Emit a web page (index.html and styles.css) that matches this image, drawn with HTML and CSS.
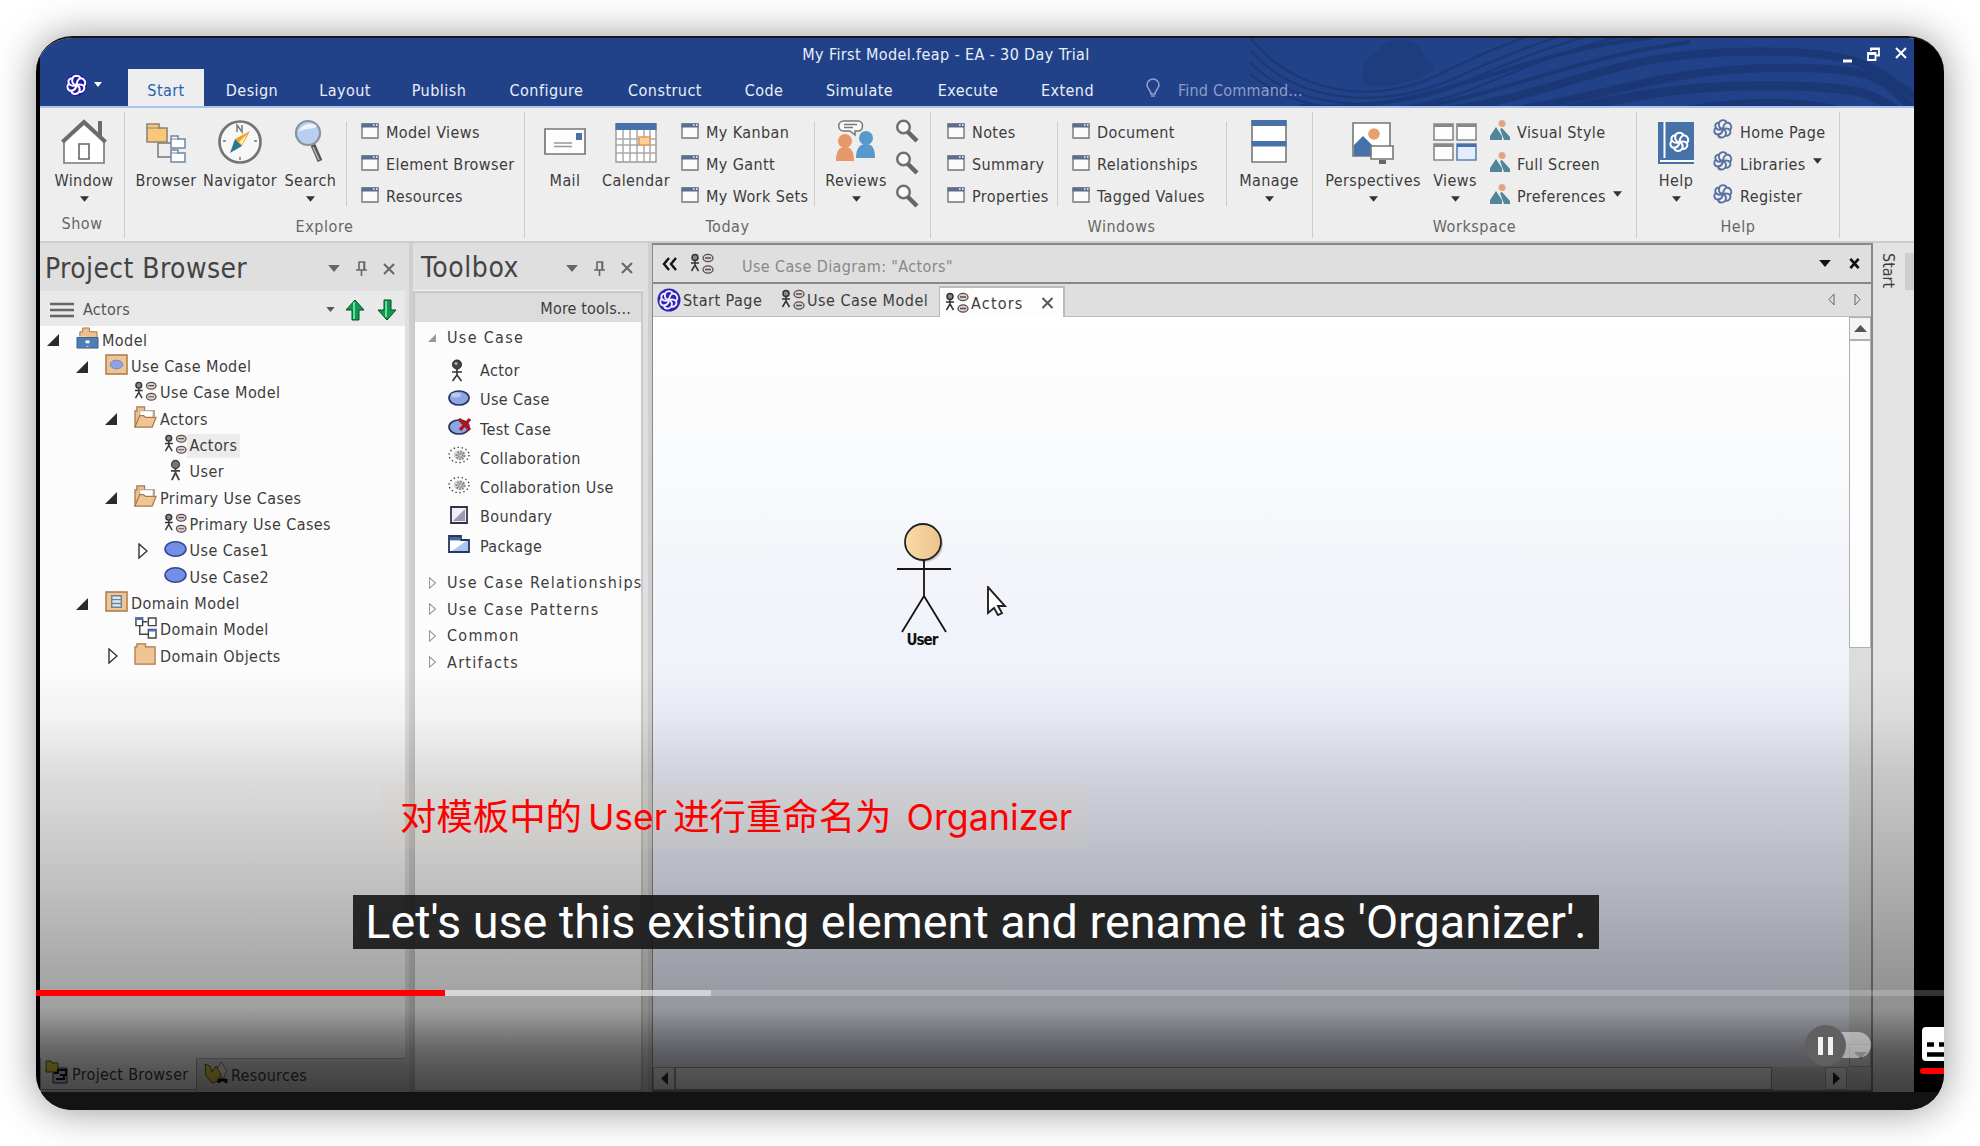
FILE: index.html
```html
<!DOCTYPE html>
<html lang="en">
<head>
<meta charset="utf-8">
<title>My First Model.feap - EA - 30 Day Trial</title>
<link rel="stylesheet" href="styles.css">
</head>
<body>
<svg class="defs" width="0" height="0" aria-hidden="true">
  <symbol id="knot" viewBox="0 0 20 20"><g fill="none" stroke="currentColor" stroke-width="1.9"><path d="M6.200 3.500C7.500 .3 12.500 .3 13.800 3.500C17.500 3.500 19.800 8 17 11C18.500 14.500 15.500 17.500 12.500 16.500C10 19.800 5.500 19 5 15.500C1.200 15.500 .2 11 2.800 8.800C1.500 6 3 3.500 6.200 3.500Z"/><path d="M10 10C6.500 9.800 5.200 7 6.200 3.500M10 10C10.300 6.500 11.500 4.500 13.800 3.500M10 10C13.500 9 15.500 9.500 17 11M10 10C13.200 11.500 13.500 14 12.500 16.500M10 10C9.500 13.500 7.500 15.300 5 15.500M10 10C6.500 11.500 4.500 11 2.800 8.800"/></g></symbol>
  <symbol id="win" viewBox="0 0 18 16"><path d="M1 1h16v14H1z" fill="#fbfbfd" stroke="#777" stroke-width="1.400"/><path d="M.5.500h17v4H.500z" fill="#5c6e8d"/><path d="M12 2h1.500M15 2h1.500" stroke="#fff" stroke-width="1.300"/></symbol>
  <symbol id="mag" viewBox="0 0 24 24"><circle cx="8.500" cy="8" r="6.300" fill="#f8f8f8" stroke="#707070" stroke-width="2.500"/><path d="M13 13L22 22" stroke="#666" stroke-width="4.500"/></symbol>
  <symbol id="pic" viewBox="0 0 20 20"><circle cx="12" cy="3.500" r="3.500" fill="#e3a581"/><path d="M0 20v-4L6 7l6 9v4zM10 9l2-1 8 9v3h-6z" fill="#538497"/></symbol>
  <symbol id="diag" viewBox="0 0 24 21"><g fill="#ddd3d3" stroke="#5a4c4c" stroke-width="1.300"><ellipse cx="18" cy="5" rx="5" ry="3.600"/><ellipse cx="18" cy="16.500" rx="5" ry="3.600"/><path d="M15 5h6M15 16.500h6"/></g><circle cx="5" cy="4.500" r="3" fill="#888" stroke="#333" stroke-width="1.500"/><path d="M5 7.500v5M1 10h8M5 12l-3.500 6M5 12l3.500 6" fill="none" stroke="#333" stroke-width="1.500"/></symbol>
  <symbol id="man" viewBox="0 0 16 24"><circle cx="8" cy="6" r="4.300" fill="#777" stroke="#444" stroke-width="1.500"/><path d="M8 10v6M3 13h10M8 15l-4 8M8 15l4 8" fill="none" stroke="#444" stroke-width="2"/></symbol>
  <symbol id="openf" viewBox="0 0 24 23"><path d="M1 22V5h2V1h8v4h10v6" fill="#edbf8b" stroke="#a87848" stroke-width="1.300"/><path d="M6 5h14v8H6z" fill="#fff" stroke="#aaa"/><path d="M1 22l5-12h4l2 2h11l-4 10z" fill="#f0c596" stroke="#a87848" stroke-width="1.300"/></symbol>
  <symbol id="oval" viewBox="0 0 22 16"><ellipse cx="11" cy="8" rx="10" ry="7" fill="#748fe8" stroke="#35468f" stroke-width="1.500"/></symbol>
  <symbol id="dots" viewBox="0 0 24 18"><ellipse cx="11" cy="9" rx="10" ry="7.600" fill="none" stroke="#444" stroke-width="1.400" stroke-dasharray="1.400 2.600"/><ellipse cx="11.500" cy="9" rx="6" ry="4.800" fill="#d4d4d4"/><ellipse cx="12.500" cy="9.500" rx="3" ry="2.800" fill="none" stroke="#777" stroke-width="4" stroke-dasharray="1 1.200"/></symbol>
  <symbol id="down" viewBox="0 0 10 6"><path d="M0 0h10L5 6z" fill="currentColor"/></symbol>
  <symbol id="pin" viewBox="0 0 12 15"><path d="M2.500 1h6v7M3 1v8M8 1v8M0 9h11M5.500 9v6" fill="none" stroke="#666" stroke-width="1.600"/></symbol>
  <symbol id="cross" viewBox="0 0 12 12"><path d="M1 1l10 10M11 1L1 11" stroke="currentColor" stroke-width="2" fill="none"/></symbol>
  <symbol id="open" viewBox="0 0 12 12"><path d="M12 0v12H0z" fill="#2b2b2b"/></symbol>
  <symbol id="closed" viewBox="0 0 10 16"><path d="M1 1l8 7-8 7z" fill="#fff" stroke="currentColor" stroke-width="1.400"/></symbol>
</svg>

<main class="player">
  <div class="app">
    <header class="titlebar">
      <svg class="waves" viewBox="0 0 664 68" aria-hidden="true"><g fill="none" stroke="#1b3775"><path stroke-width="2" d="M0 0C50 60 130 66 190 36S290-6 330-20M0 12C50 70 140 70 205 40S320-6 350-14M0 24C50 78 150 74 215 44S340-4 380-12M0 36C60 86 160 78 235 46S350 2 400-8"/><path stroke-width="4" d="M50 68C180 78 260 14 400 0M90 74C220 78 290 24 440 4"/><path stroke-width="8" d="M150 76C290 70 340 18 480 14S620 30 670 62M220 78C340 66 400 32 520 30S630 44 670 76"/><path stroke-width="9" d="M300 76C400 52 460 46 540 48S620 56 660 80M420 76C480 62 560 62 600 76"/></g><path d="M114 46c-4-14 0-28 14-32 6-16 38-16 44 0 4 8 10 10 14 16-20 14-46 22-72 16z" fill="#1b3775" opacity=".5"/></svg>
      <div class="caption"><span class="caption-text">My First Model.feap - EA - 30 Day Trial</span>
        <span class="winbtns"><svg width="9" height="16"><path d="M0 14h9" stroke="#fff" stroke-width="3"/></svg><svg width="13" height="14" viewBox="0 0 13 14"><path d="M4 4V1.500h8v7H9M1 6h7.500v7H1zM4 2h8M1 7h8" fill="none" stroke="#fff" stroke-width="1.800"/></svg><svg width="12" height="12" class="white"><use href="#cross"/></svg></span></div>
      <nav class="tabs">
        <span class="appbtn"><svg width="21" height="22"><use href="#knot"/></svg><svg width="8" height="5"><use href="#down"/></svg></span>
        <span class="tab on w76">Start</span><span class="tab w96">Design</span><span class="tab w90">Layout</span><span class="tab w98">Publish</span><span class="tab w117">Configure</span><span class="tab w120">Construct</span><span class="tab w78">Code</span><span class="tab w113">Simulate</span><span class="tab w104">Execute</span><span class="tab w95">Extend</span>
        <span class="find"><svg width="14" height="20" viewBox="0 0 14 20"><path d="M5 16c0-4-4-5-4-9a6 6 0 0 1 12 0c0 4-4 5-4 9zM5 18h4" fill="none" stroke="#8f9fc6" stroke-width="1.600"/></svg>Find Command...</span>
      </nav>
    </header>

    <section class="ribbon">
      <div class="group g-show"><div class="tools">
        <div class="big w88"><svg width="46" height="46" viewBox="0 0 46 46"><path d="M37 2h4v20l-4-4z" fill="#6b6b6b"/><path d="M3 22v22h40V22L23 5z" fill="#fff" stroke="#777" stroke-width="1.600"/><path d="M1.500 23L23 3l21.500 20" fill="none" stroke="#6b6b6b" stroke-width="4"/><path d="M18 25h10v15H18z" fill="#fff" stroke="#666" stroke-width="1.600"/></svg><span>Window</span><svg class="arr"><use href="#down"/></svg></div>
      </div><div class="name">Show</div></div>

      <div class="group g-explore"><div class="tools">
        <div class="big w78"><svg width="40" height="46" viewBox="0 0 40 46"><path d="M12 24v14h14M12 24h14" fill="none" stroke="#777" stroke-width="1.500"/><path d="M1 5h12v4h8v14H1z" fill="#f9c778" stroke="#8f8577" stroke-width="1.600"/><path d="M1 9h14" stroke="#8f8577"/><path d="M25 17h7v3h7v9H25zM25 31h7v3h7v9H25z" fill="#fff" stroke="#6c87a3" stroke-width="1.500"/><path d="M25 20h8M25 34h8" stroke="#6c87a3"/></svg><span>Browser</span></div>
        <div class="big w70"><svg width="44" height="46" viewBox="0 0 44 46"><circle cx="22" cy="23" r="20.500" fill="#f7f7f7" stroke="#747474" stroke-width="2.700"/><path d="M19 13V6l5 7V6M5 22h3M36 22h3M22 38v3" fill="none" stroke="#777" stroke-width="1.500"/><path d="M32 12L17 20l7 7z" fill="#f0a12e"/><path d="M29 15l-8 8 3 3z" fill="#fff3a0"/><path d="M12 34l5-14 7 7z" fill="#2e7590"/></svg><span>Navigator</span></div>
        <div class="big w71"><svg width="34" height="46" viewBox="0 0 34 46"><circle cx="14" cy="14" r="12" fill="#b9cfee" stroke="#8b929c" stroke-width="2.200"/><path d="M4 13c5-9 14-10 19-6-3 4-10 1-19 6z" fill="#eaf3ff"/><path d="M19 26l7 16" stroke="#555" stroke-width="5"/><path d="M19 28l6 13" stroke="#bbb" stroke-width="1.500"/></svg><span>Search</span><svg class="arr"><use href="#down"/></svg></div>
        <div class="list sep pl15"><span><svg><use href="#win"/></svg>Model Views</span><span><svg><use href="#win"/></svg>Element Browser</span><span><svg><use href="#win"/></svg>Resources</span></div>
      </div><div class="name">Explore</div></div>

      <div class="group g-today"><div class="tools">
        <div class="big w80"><svg width="42" height="46" viewBox="0 0 42 46"><path d="M1 10h40v25H1z" fill="#fdfdfd" stroke="#777" stroke-width="1.700"/><path d="M32 14h6v7h-6z" fill="#4b72a8"/><path d="M10 24h18M10 27.500h18" stroke="#999" stroke-width="1.300"/></svg><span>Mail</span></div>
        <div class="big w62"><svg width="42" height="46" viewBox="0 0 42 46"><path d="M1 5h40v38H1z" fill="#fff" stroke="#999" stroke-width="1.400"/><path d="M8 11v32M15 11v32M22 11v32M29 11v32M35 11v32M1 20h40M1 26h40M1 34h40" stroke="#a9a9a9" stroke-width="1.500"/><path d="M.5 4h41v7H.500z" fill="#4672a9"/><path d="M24 18h11v8H24z" fill="#fad196" stroke="#e59b5f" stroke-width="1.600"/></svg><span>Calendar</span></div>
        <div class="list w147 pl14"><span><svg><use href="#win"/></svg>My Kanban</span><span><svg><use href="#win"/></svg>My Gantt</span><span><svg><use href="#win"/></svg>My Work Sets</span></div>
        <div class="big w84 sep"><svg width="44" height="46" viewBox="0 0 44 46"><path d="M10 2h14c6 0 6 10 0 10h-3v4l-5-4h-6c-7 0-7-10 0-10zM10 5.500h13M10 8.500h9" fill="#fafafa" stroke="#777" stroke-width="1.500"/><circle cx="11" cy="22" r="7" fill="#e59868"/><path d="M2 42c0-10 3-14 9-14s9 4 9 14z" fill="#e59868"/><circle cx="32" cy="19" r="7" fill="#5799cb"/><path d="M22 39c0-10 4-14 10-14s9 4 9 14z" fill="#5799cb"/></svg><span>Reviews</span><svg class="arr"><use href="#down"/></svg></div>
        <div class="mags"><svg><use href="#mag"/></svg><svg><use href="#mag"/></svg><svg><use href="#mag"/></svg></div>
      </div><div class="name">Today</div></div>

      <div class="group g-windows"><div class="tools">
        <div class="list w126 pl16"><span><svg><use href="#win"/></svg>Notes</span><span><svg><use href="#win"/></svg>Summary</span><span><svg><use href="#win"/></svg>Properties</span></div>
        <div class="list sep w169 pl15"><span><svg><use href="#win"/></svg>Document</span><span><svg><use href="#win"/></svg>Relationships</span><span><svg><use href="#win"/></svg>Tagged Values</span></div>
        <div class="big w86 sep"><svg width="38" height="46" viewBox="0 0 38 46"><path d="M2 2h34v41H2z" fill="#fff" stroke="#777" stroke-width="1.600"/><path d="M1.500 1h35v6h-35zM1.500 22h35v5.500h-35z" fill="#4672a9"/></svg><span>Manage</span><svg class="arr"><use href="#down"/></svg></div>
      </div><div class="name">Windows</div></div>

      <div class="group g-work"><div class="tools">
        <div class="big w120"><svg width="42" height="46" viewBox="0 0 42 46"><path d="M1 4h37v33H1z" fill="#fff" stroke="#777" stroke-width="1.600"/><circle cx="22" cy="15" r="5.800" fill="#e8a06c"/><path d="M2 37V26l9-9 12 12v8z" fill="#4672a9"/><path d="M19 27h22v13H19z" fill="#fff" stroke="#777" stroke-width="1.600"/><path d="M27 41h7v4h-7z" fill="#666"/></svg><span>Perspectives</span><svg class="arr"><use href="#down"/></svg></div>
        <div class="big w44"><svg width="44" height="46" viewBox="0 0 44 46"><g fill="#fdfdfd" stroke="#888" stroke-width="1.600"><path d="M1 5h19v16H1zM24 5h19v16H24zM1 25h19v16H1z"/><path d="M24 25h19v16H24z" fill="#e3edfb" stroke="#5d80ad"/></g><path d="M1 6.500h19M24 6.500h19M1 26.500h19" stroke="#888" stroke-width="3"/><path d="M24 26.500h19" stroke="#4672a9" stroke-width="3"/></svg><span>Views</span><svg class="arr"><use href="#down"/></svg></div>
        <div class="list pics"><span><svg><use href="#pic"/></svg>Visual Style</span><span><svg><use href="#pic"/></svg>Full Screen</span><span><svg><use href="#pic"/></svg>Preferences<svg class="arr"><use href="#down"/></svg></span></div>
      </div><div class="name">Workspace</div></div>

      <div class="group g-help"><div class="tools">
        <div class="big w78"><svg width="38" height="46" viewBox="0 0 38 46"><path d="M1 3h36v42H1z" fill="#4672a9"/><path d="M7.500 3v36M3 42h34" stroke="#fff" stroke-width="2"/><svg x="12" y="12" width="21" height="22" color="#fff"><use href="#knot"/></svg></svg><span>Help</span><svg class="arr"><use href="#down"/></svg></div>
        <div class="list knots"><span><svg><use href="#knot"/></svg>Home Page</span><span><svg><use href="#knot"/></svg>Libraries<svg class="arr"><use href="#down"/></svg></span><span><svg><use href="#knot"/></svg>Register</span></div>
      </div><div class="name">Help</div></div>
    </section>

    <div class="work">
      <aside class="browser">
        <div class="phead"><h2>Project Browser</h2><svg width="14" height="7"><use href="#down"/></svg><svg width="12" height="15"><use href="#pin"/></svg><svg width="12" height="12"><use href="#cross"/></svg></div>
        <div class="ptool"><svg width="24" height="16"><path d="M0 2h24M0 8h24M0 14h24" stroke="#666" stroke-width="2.500"/></svg><span class="grow">Actors</span><svg width="9" height="5"><use href="#down"/></svg>
          <svg class="up" width="20" height="22" viewBox="0 0 20 22"><path d="M10 1l9 10h-5v10H7V11H1z" fill="#0f9a50" stroke="#064c28"/><path d="M9 3v17" stroke="#5fe39a" stroke-width="2"/></svg><svg width="20" height="22" viewBox="0 0 20 22"><path d="M10 21l9-10h-5V1H7v10H1z" fill="#0f9a50" stroke="#064c28"/><path d="M9 2v16" stroke="#5fe39a" stroke-width="2"/></svg></div>
        <ul class="tree">
          <li class="l1"><svg class="tw"><use href="#open"/></svg><svg class="ic" viewBox="0 0 24 23"><path d="M4 10V5h3V1h7v4h8v6" fill="#edbf8b" stroke="#a87848"/><path d="M1 11h22v11H1z" fill="#4d7fb5" stroke="#35608f"/><path d="M10 14h4v3h-4zM11 20h2v1h-2z" fill="#fff"/></svg>Model</li>
          <li class="l2"><svg class="tw"><use href="#open"/></svg><svg class="ic" viewBox="0 0 24 23"><path d="M1 1h22v20H1z" fill="#f0c596" stroke="#a87848" stroke-width="1.500"/><ellipse cx="12" cy="11" rx="6.500" ry="4.500" fill="#8ea2e8" stroke="#7080c0"/></svg>Use Case Model</li>
          <li class="l3"><i class="tw"></i><svg class="ic"><use href="#diag"/></svg>Use Case Model</li>
          <li class="l3"><svg class="tw"><use href="#open"/></svg><svg class="ic"><use href="#openf"/></svg>Actors</li>
          <li class="l4"><i class="tw"></i><svg class="ic"><use href="#diag"/></svg><span class="sel">Actors</span></li>
          <li class="l4"><i class="tw"></i><svg class="ic"><use href="#man"/></svg>User</li>
          <li class="l3"><svg class="tw"><use href="#open"/></svg><svg class="ic"><use href="#openf"/></svg>Primary Use Cases</li>
          <li class="l4"><i class="tw"></i><svg class="ic"><use href="#diag"/></svg>Primary Use Cases</li>
          <li class="l4"><svg class="tw closed"><use href="#closed"/></svg><svg class="ic"><use href="#oval"/></svg>Use Case1</li>
          <li class="l4"><i class="tw"></i><svg class="ic"><use href="#oval"/></svg>Use Case2</li>
          <li class="l2"><svg class="tw"><use href="#open"/></svg><svg class="ic" viewBox="0 0 24 23"><path d="M1 1h22v20H1z" fill="#f0c596" stroke="#a87848" stroke-width="1.500"/><path d="M7 5h10v12H7zM7 9h10M7 13h10" fill="#dfe8ee" stroke="#6e8496" stroke-width="1.500"/></svg>Domain Model</li>
          <li class="l3"><i class="tw"></i><svg class="ic" viewBox="0 0 24 23"><path d="M9 5h5M6 9v9h9" fill="none" stroke="#444" stroke-width="1.500"/><path d="M2 1h7v8H2zM15 1h8v8h-8zM15 13h8v9h-8z" fill="#fff" stroke="#444" stroke-width="1.500"/><path d="M2 2h7M15 14h8" stroke="#4672c9" stroke-width="2.500"/></svg>Domain Model</li>
          <li class="l3"><svg class="tw closed"><use href="#closed"/></svg><svg class="ic" viewBox="0 0 24 23"><path d="M1 22V4h2V1h9v3h10v18z" fill="#f0c596" stroke="#a87848" stroke-width="1.300"/></svg>Domain Objects</li>
        </ul>
        <div class="ptabs"><span class="cur"><svg width="24" height="24" viewBox="0 0 24 24"><path d="M8 8h14v15H8z" fill="#ccd" stroke="#337"/><path d="M1 1h5l1 2h6v9H1z" fill="#e5d443" stroke="#665c10"/><path d="M9 13h4v-3h8v5h-6M11 19h8v-3" fill="none" stroke="#113" stroke-width="2"/></svg>Project Browser</span><span><svg width="24" height="24" viewBox="0 0 24 24"><path d="M12 10l5-9 6 9-4 8z" fill="#eee" stroke="#777"/><path d="M1 3l5 2 2 6 4-6 5 8-3 7-6 2-6-7z" fill="#e5c943" stroke="#665c10"/><path d="M15 22v-4M22 22v-4M15 19h7" stroke="#111" stroke-width="3"/></svg>Resources</span></div>
      </aside>

      <aside class="toolbox">
        <div class="phead"><h2>Toolbox</h2><svg width="14" height="7"><use href="#down"/></svg><svg width="12" height="15"><use href="#pin"/></svg><svg width="12" height="12"><use href="#cross"/></svg></div>
        <div class="tbody">
          <div class="more">More tools...</div>
          <div class="sec first"><svg width="8" height="8" class="tri"><path d="M8 0v8H0z" fill="#999"/></svg>Use Case</div>
          <ul class="items">
            <li><svg viewBox="0 0 24 24"><circle cx="9" cy="5.500" r="4.500" fill="#444" stroke="#222"/><circle cx="8" cy="4.500" r="1.600" fill="#aaa"/><path d="M9 10v6M4 13h10M9 16l-4.500 6M9 16l4.500 6" fill="none" stroke="#333" stroke-width="1.600"/></svg>Actor</li>
            <li><svg viewBox="0 0 24 24"><ellipse cx="11" cy="10" rx="10" ry="7" fill="#8da6e3" stroke="#2b3560" stroke-width="1.700"/><ellipse cx="8" cy="7" rx="5" ry="2.500" fill="#b7caf6"/></svg>Use Case</li>
            <li><svg viewBox="0 0 24 24"><ellipse cx="11" cy="10" rx="10" ry="7" fill="#8da6e3" stroke="#2b3560" stroke-width="1.700"/><path d="M11 2l11 11M22 2l-10 11" stroke="#b31218" stroke-width="3.300"/></svg>Test Case</li>
            <li><svg viewBox="0 0 24 24"><use href="#dots" width="24" height="18"/></svg>Collaboration</li>
            <li><svg viewBox="0 0 24 24"><use href="#dots" width="24" height="18"/></svg>Collaboration Use</li>
            <li><svg viewBox="0 0 24 24"><path d="M3 2h16v16H3z" fill="#eef" stroke="#334" stroke-width="1.800"/><path d="M17 4v12H5z" fill="#9a9ab0"/></svg>Boundary</li>
            <li><svg viewBox="0 0 24 24"><path d="M1 2h12v4h8v12H1z" fill="#a9c8f0" stroke="#26365c" stroke-width="1.800"/><path d="M2 7h16L4 17H2z" fill="#fff"/><path d="M2 3h11v3H2z" fill="#46639a"/></svg>Package</li>
          </ul>
          <div class="sec"><svg class="tri c"><use href="#closed"/></svg>Use Case Relationships</div>
          <div class="sec"><svg class="tri c"><use href="#closed"/></svg>Use Case Patterns</div>
          <div class="sec"><svg class="tri c"><use href="#closed"/></svg>Common</div>
          <div class="sec"><svg class="tri c"><use href="#closed"/></svg>Artifacts</div>
        </div>
      </aside>

      <section class="diagram">
        <div class="dhead"><svg width="15" height="14" viewBox="0 0 15 14"><path d="M7 1L2 7l5 6M14 1L9 7l5 6" fill="none" stroke="#111" stroke-width="2.400"/></svg><svg class="dico"><use href="#diag"/></svg><span class="grow">Use Case Diagram: "Actors"</span><svg width="12" height="7"><use href="#down"/></svg><svg width="11" height="11" viewBox="0 0 12 12"><path d="M1.500 1l9 10M10.500 1l-9 10" stroke="#111" stroke-width="3"/></svg></div>
        <div class="dtabs"><span class="dt sp"><svg width="24" height="24"><circle cx="12" cy="12" r="11.500" fill="#2f21b8"/><svg x="2" y="2" width="20" height="20" color="#eef"><use href="#knot"/></svg></svg>Start Page</span><span class="dt uc"><svg class="dico"><use href="#diag"/></svg>Use Case Model</span><span class="dt cur"><svg class="dico"><use href="#diag"/></svg>Actors<svg width="13" height="12" class="x"><use href="#cross"/></svg></span>
          <span class="navs"><svg width="7" height="13" viewBox="0 0 7 13"><path d="M6 1v11L1 6.500z" fill="none" stroke="#666"/></svg><svg width="7" height="13" viewBox="0 0 7 13"><path d="M1 1v11l5-5.500z" fill="none" stroke="#666"/></svg></span></div>
        <div class="dmain">
          <div class="canvas">
            <div class="actor"><svg width="58" height="112" viewBox="0 0 58 112"><defs><linearGradient id="skin"><stop offset="0" stop-color="#fadbaa"/><stop offset="1" stop-color="#edc28c"/></linearGradient></defs><circle cx="29" cy="21" r="18" fill="#000" opacity=".18"/><circle cx="27" cy="19" r="18" fill="url(#skin)" stroke="#222" stroke-width="1.800"/><path d="M28 37v36M1 46h54M28 73L6 109M28 73l22 36" fill="none" stroke="#151515" stroke-width="1.800"/></svg><span>User</span></div>
            <svg class="cursor" width="22" height="32" viewBox="0 0 22 32"><path d="M2 1v26l6-5 4 7 4-2-4-7h7z" fill="#fff" stroke="#222" stroke-width="1.900"/></svg>
          </div>
          <div class="vbar"><span class="btn"><svg width="13" height="7"><path d="M0 7h13L6.500 0z" fill="#555"/></svg></span><span class="thumb"></span><span class="btn end"><svg width="13" height="7"><path d="M0 0h13L6.500 7z" fill="#333"/></svg></span></div>
        </div>
        <div class="hbar"><span class="btn"><svg width="7" height="13"><path d="M7 0v13L0 6.500z" fill="#333"/></svg></span><span class="thumb"></span><span class="btn end"><svg width="7" height="13"><path d="M0 0v13l7-6.500z" fill="#222"/></svg></span></div>
      </section>
      <aside class="rail"><span>Start</span><i></i></aside>
    </div>
  </div>

  <div class="shade"></div>
  <div class="note" lang="zh">对模板中的<b>User</b>进行重命名为<b class="org">Organizer</b></div>
  <div class="subtitle">Let's use this existing element and rename it as 'Organizer'.</div>
  <div class="progress"><i class="played"></i><i class="loaded"></i></div>
  <div class="autoplay"><span class="knob"><i></i><i></i></span></div>
  <svg class="cc" width="24" height="50" viewBox="0 0 24 50"><path d="M6 1h18v34H6q-4 0-4-4V5q0-4 4-4z" fill="#fff"/><path d="M7 18.500h7M19 18.500h5M7 28.500h17" stroke="#000" stroke-width="4.500"/><path d="M24 42H3q-3 0-3 3t3 3h21z" fill="#f00"/></svg>
</main>
</body>
</html>
```

FILE: styles.css
```css
* { box-sizing: border-box; }
body { margin: 0; width: 1980px; height: 1146px; overflow: hidden; background: #fff; padding: 36px; font-family: "DejaVu Sans Condensed", "DejaVu Sans", sans-serif; font-stretch: condensed; font-size: 16px; color: #3c3c3c; }
.defs { position: absolute; }
svg { flex: none; }
ul { list-style: none; margin: 0; padding: 0; }
.player { position: relative; width: 1908px; height: 1074px; border-radius: 36px; overflow: hidden; background: #000; border-top: 2px solid #161616; padding: 0 30px 18px 4px; }
body::before { content: ""; position: absolute; left: 36px; top: 36px; width: 1908px; height: 1074px; border-radius: 36px; box-shadow: 0 1px 40px rgba(0,0,0,.42); }
.player::after { content: ""; position: absolute; left: 0; right: 0; bottom: 0; height: 18px; background: #131313; }
.app { height: 1054px; display: flex; flex-direction: column; background: #dfdfdf; }

.titlebar { position: relative; height: 70px; background: #214288; border-bottom: 2px solid #a9c4ee; color: #e9effa; display: flex; flex-direction: column; }
.waves { position: absolute; right: 0; top: 0; width: 664px; height: 68px; }
.caption { position: relative; height: 33px; display: flex; align-items: center; justify-content: center; }
.caption-text { padding: 2px 62px 0 0; letter-spacing: .38px; }
.winbtns { position: absolute; right: 7px; top: 9px; display: flex; gap: 15px; }
.white { color: #fff; }
.tabs { position: relative; height: 37px; display: flex; letter-spacing: .45px; }
.appbtn { width: 88px; padding: 5px 0 0 26px; display: flex; gap: 7px; color: #fff; }
.appbtn svg:first-child { background: #2418a8; border-radius: 10px; }
.appbtn svg:last-child { margin-top: 8px; }
.tab { text-align: center; line-height: 43px; height: 37px; }
.tab.on { background: #eee; color: #2463b0; }
.find { display: flex; gap: 18px; align-items: center; padding: 6px 0 0 31px; color: #8f9fc6; letter-spacing: .2px; }
.find svg { margin-top: -6px; }

.w44 { width: 44px; } .w62 { width: 62px; } .w70 { width: 70px; } .w71 { width: 71px; } .w76 { width: 76px; } .w78 { width: 78px; } .w80 { width: 80px; } .w84 { width: 84px; } .w86 { width: 86px; } .w88 { width: 88px; }
.w90 { width: 90px; } .w95 { width: 95px; } .w96 { width: 96px; } .w98 { width: 98px; } .w104 { width: 104px; } .w113 { width: 113px; } .w117 { width: 117px; }
.w120 { width: 120px; } .w126 { width: 126px; } .w147 { width: 147px; } .w169 { width: 169px; }
.pl14 { padding-left: 14px; } .pl15 { padding-left: 15px; } .pl16 { padding-left: 16px; }

.ribbon { height: 135px; background: #eee; display: flex; padding-top: 4px; border-bottom: 2px solid #cdcdcd; letter-spacing: .4px; }
.group { height: 126px; border-right: 1px solid #ccc; display: flex; flex-direction: column; }
.tools { height: 101px; display: flex; }
.name { text-align: center; color: #666; line-height: 28px; letter-spacing: .55px; }
.g-show { width: 85px; } .g-explore { width: 400px; } .g-today { width: 406px; } .g-windows { width: 382px; } .g-work { width: 324px; } .g-help { width: 203px; }
.big { position: relative; display: flex; flex-direction: column; align-items: center; padding-top: 7px; white-space: nowrap; flex: none; }
.big span { line-height: 20px; margin-top: 6px; }
.arr { width: 9px; height: 6px; color: #333; margin-top: 5px; }
.g-explore .tools { padding-left: 2px; }
.sep::before { content: ""; position: absolute; left: 0; top: 10px; width: 1px; height: 84px; background: #ccc; }
.list { position: relative; display: flex; flex-direction: column; padding-top: 4px; white-space: nowrap; }
.list > span { display: flex; align-items: center; height: 32.4px; gap: 7px; }
.list > span > svg { width: 18px; height: 16px; margin-top: -3px; }
.mags { display: flex; flex-direction: column; gap: 8.4px; padding: 7px 0 0 0; margin-left: -3px; }
.mags svg { width: 24px; height: 24px; }
.pics { padding-left: 13px; }
.list.pics > span > svg:first-child { width: 20px; height: 20px; margin-top: -5px; }
.list > span > svg.arr { width: 9px; height: 6px; margin-top: -6px; }
.list.knots > span > svg:first-child { width: 20px; height: 20px; margin: -6px 0 0 -2px; color: #56709f; }

.work { flex: 1; display: flex; min-height: 0; }
.browser { width: 365px; display: flex; flex-direction: column; background: #fcfcfc; }
.phead { height: 48px; background: #dfdfdf; display: flex; align-items: center; padding: 3px 10px 0 5px; gap: 15px; color: #666; }
.phead h2 { margin: 0; flex: 1; font-size: 28px; font-weight: 400; color: #444; line-height: 40px; white-space: nowrap; letter-spacing: .4px; }
.ptool { height: 35px; background: #e9e9e9; display: flex; align-items: center; padding: 2px 8px 0 10px; gap: 9px; color: #555; letter-spacing: .3px; }
.ptool svg + svg { margin-left: 1px; }
.ptool .up + svg { margin-left: 3px; }
.grow { flex: 1; }
.tree { flex: 1; padding-top: 1px; letter-spacing: .42px; }
.tree li { height: 26.35px; display: flex; align-items: center; white-space: nowrap; }
.tw { width: 12px; height: 12px; margin-right: 17px; flex: none; }
.tw.closed { width: 10px; height: 16px; margin: 0 16px 0 3px; color: #333; }
.ic { width: 23px; height: 22px; margin: -4px 3px 0 0; }
.l1 { padding-left: 7px; } .l2 { padding-left: 36px; } .l3 { padding-left: 65px; } .l4 { padding-left: 94.500px; }
.sel { background: #ececec; margin-left: -3px; padding: 0 3px; line-height: 24px; }
.ptabs { height: 34px; background: #dfdfdf; border-top: 1px solid #bbb; display: flex; letter-spacing: .3px; }
.ptabs span { display: flex; align-items: center; gap: 3px; padding: 0 7px; height: 32px; white-space: nowrap; }
.ptabs svg { margin-top: -4px; }
.ptabs .cur { background: #fcfcfc; border: 1px solid #aaa; border-top: 0; width: 157px; padding: 1px 0 0 4px; margin-top: -1px; height: 32px; }

.toolbox { width: 239px; margin-left: 8px; display: flex; flex-direction: column; box-shadow: -4px 0 0 #cfcfcf; padding-right: 9px; }
.toolbox .phead { padding-left: 8px; border-bottom: 1px solid #f4f4f4; }
.toolbox .phead h2 { letter-spacing: .6px; }
.tbody { flex: 1; border: 2px solid #c9c9c9; background: #fcfcfc; overflow: hidden; }
.more { background: #dcdcdc; height: 29px; line-height: 32px; text-align: right; padding-right: 10px; letter-spacing: .15px; }
.sec { height: 26.4px; display: flex; align-items: center; gap: 8px; padding-left: 13px; white-space: nowrap; letter-spacing: 1.3px; }
.sec.first { height: 31px; gap: 11px; }
.tri { color: #999; }
.tri.c { width: 9px; height: 12px; margin-right: 2px; }
.items { padding: 3px 0 9px; }
.items li { height: 29.25px; display: flex; align-items: center; padding-left: 33px; gap: 8px; white-space: nowrap; letter-spacing: .38px; }
.items svg { width: 24px; height: 24px; }

.diagram { width: 1221px; border: 1px solid #888; border-width: 2px 2px 2px 1px; display: flex; flex-direction: column; box-shadow: -4px 0 0 #cfcfcf; }
.dhead { height: 39px; background: #dfdfdf; border-bottom: 2px solid #888; display: flex; align-items: center; padding: 0 11px 0 9px; color: #888; gap: 13px; }
.dhead .grow { padding: 5px 0 0 15px; letter-spacing: .38px; }
.dhead > svg:nth-last-child(2) { color: #111; margin-right: 5px; }
.dico { width: 24px; height: 21px; }
.dtabs { height: 33px; display: flex; background: #dfdfdf; border-bottom: 1px solid #bbb; }
.dt { display: flex; align-items: center; gap: 2px; white-space: nowrap; letter-spacing: .48px; padding-top: 1px; }
.dt svg { margin-top: -2px; }
.sp { width: 124px; padding-left: 4px; } .uc { width: 162px; padding-left: 4px; }
.dt.cur { background: #fdfdfd; border: 2px solid #bbb; border-width: 2px 2px 0 1px; width: 126px; height: 31px; margin-top: 2px; padding-left: 5px; letter-spacing: 1.2px; }
.dt .x { margin: 0 0 0 15px; color: #555; }
.navs { margin-left: auto; display: flex; gap: 19px; padding: 9px 10px 0 0; }
.dmain { flex: 1; display: flex; min-height: 0; }
.canvas { position: relative; flex: 1; background: linear-gradient(#fff 0, #fcfcfd 12%, #f8fafb 22%, #f3f5fa 32%, #eef1fa 55%, #e9eefb 100%); }
.actor { position: absolute; left: 243px; top: 206px; width: 58px; text-align: center; color: #111; }
.actor svg { display: block; }
.actor span { display: block; font-weight: 700; font-size: 15px; letter-spacing: -.9px; line-height: 16px; padding-right: 6px; margin-top: -3px; }
.cursor { position: absolute; left: 333px; top: 269px; }
.vbar { width: 22px; background: #dcdcdc; display: flex; flex-direction: column; }
.btn { height: 23px; width: 22px; background: #f4f4f4; border: 1px solid #b0b0b0; display: flex; align-items: center; justify-content: center; }
.vbar .thumb { height: 308px; background: #fdfdfd; border: 1px solid #b0b0b0; }
.vbar .end { margin-top: auto; background: #e8e8e8; }
.hbar { height: 23px; background: #d8d8d8; display: flex; }
.hbar .thumb { width: 1097px; background: #fafafa; border: 1px solid #999; }
.hbar .end { margin: 0 24px 0 auto; }
.rail { flex: 1; background: #e3e3e3; display: flex; align-items: flex-start; justify-content: space-between; padding: 10px 0 0 5px; }
.rail span { writing-mode: vertical-rl; line-height: 20px; }
.rail i { width: 9px; height: 37px; background: #cdcdcd; }

.shade { position: absolute; left: 0; right: 0; top: 630px; bottom: 18px; background: linear-gradient(rgba(0,0,0,0) 0, rgba(0,0,0,.04) 50px, rgba(0,0,0,.12) 104px, rgba(0,0,0,.23) 212px, rgba(0,0,0,.33) 300px, rgba(0,0,0,.37) 341px, rgba(0,0,0,.5) 364px, rgba(0,0,0,.6) 382px, rgba(0,0,0,.66) 400px, rgba(0,0,0,.72) 424px); }
.note { position: absolute; left: 345px; top: 745px; height: 66px; width: 704px; padding-left: 19px; background: rgba(225,205,185,.12); color: #f00; font: 36.400px/69px Inter, "Noto Sans CJK SC", sans-serif; white-space: pre; display: flex; }
.note b { font-weight: 400; font-size: 35.500px; padding: 0 6px; }
.note .org { padding-left: 15px; font-size: 35.800px; }
.subtitle { position: absolute; left: 317px; top: 857px; width: 1246px; height: 54px; background: rgba(20,20,20,.89); color: #fff; font: 46.750px/54px Roboto, sans-serif; text-align: center; white-space: nowrap; }
.progress { position: absolute; left: 0; top: 952px; width: 1908px; height: 6px; background: rgba(255,255,255,.2); display: flex; }
.played { width: 409px; background: #f00; }
.loaded { width: 266px; background: rgba(255,255,255,.45); }
.autoplay { position: absolute; left: 1789px; top: 994px; width: 46px; height: 26px; border-radius: 13px; background: rgba(255,255,255,.48); }
.knob { position: absolute; left: -20px; top: -7px; width: 41px; height: 41px; border-radius: 50%; background: #606060; display: flex; align-items: center; justify-content: center; gap: 5px; }
.knob i { width: 5px; height: 18px; background: #f1f1f1; }
.cc { position: absolute; right: 0; top: 988px; }
```
